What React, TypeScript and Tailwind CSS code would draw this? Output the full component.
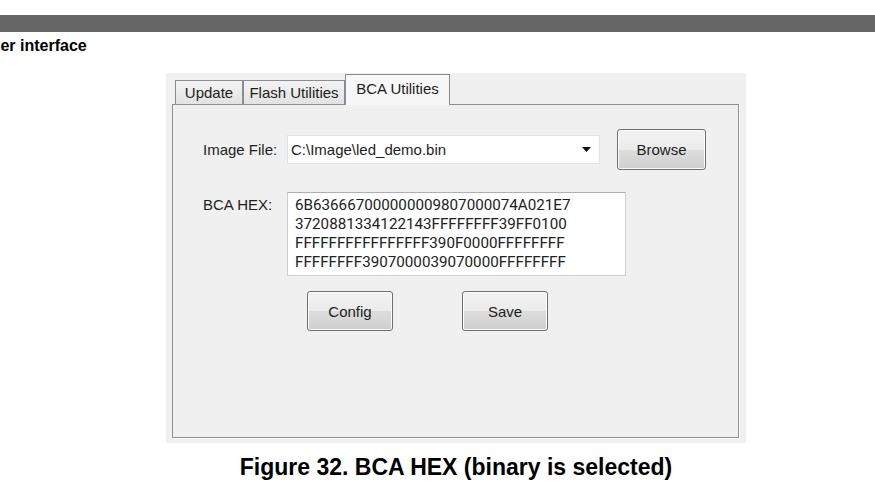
export default function App() {
  const hexLines = [
    '6B636667000000009807000074A021E7',
    '3720881334122143FFFFFFFF39FF0100',
    'FFFFFFFFFFFFFFFF390F0000FFFFFFFF',
    'FFFFFFFF3907000039070000FFFFFFFF',
  ];

  const btn =
    'rounded-[3px] border border-[#707070] text-[15px] text-[#1e1e1e] ' +
    'bg-[linear-gradient(to_bottom,#f3f3f3_0%,#ebebeb_50%,#dddddd_50%,#cfcfcf_100%)] ' +
    'shadow-[inset_0_0_0_1px_#fbfbfb] flex items-center justify-center';

  return (
    <div className="w-[875px] h-[498px] overflow-hidden bg-white font-['Liberation_Sans',Arial,sans-serif]">
      <div className="h-[15px]" />
      <div className="h-[17px] bg-[#666666]" />
      <p className="-ml-[20px] mt-[4px] text-[16px] leading-[20px] font-bold text-black whitespace-nowrap">
        User interface
      </p>

      {/* window screenshot */}
      <div className="ml-[166px] mt-[17px] w-[580px] h-[370px] bg-[#f0f0f0] flex flex-col pl-[6px] pr-[7px] pb-[5px] text-[#1e1e1e]">
        <div className="h-[31px] flex items-end pl-[3px] relative z-10">
          <div className="w-[68px] h-[24px] border border-b-0 border-[#898c95] bg-[linear-gradient(to_bottom,#f3f3f3,#e2e2e2)] flex items-center justify-center text-[15px] leading-[20px]">
            Update
          </div>
          <div className="w-[102px] h-[24px] border border-b-0 border-[#898c95] bg-[linear-gradient(to_bottom,#f3f3f3,#e2e2e2)] flex items-center justify-center text-[15px] leading-[20px]">
            Flash Utilities
          </div>
          <div className="w-[105px] h-[31px] -mb-px border border-b-0 border-[#898c95] bg-[#f7f7f7] flex justify-center pt-[4px] text-[15px] leading-[20px]">
            BCA Utilities
          </div>
        </div>

        <div className="flex-1 border border-[#8e8f93] bg-[#f0f0f0] shadow-[1px_1px_0_#ffffff] pl-[30px] pt-[24px]">
          {/* image file row */}
          <div className="flex items-center">
            <div className="w-[84px] text-[15px] leading-[19px]">Image File:</div>
            <div className="w-[313px] h-[29px] bg-white border border-[#dfe3e8] flex items-center pl-[3px] pr-[8px]">
              <span className="flex-1 text-[15px] leading-[19px]">C:\Image\led_demo.bin</span>
              <svg width="9" height="5" viewBox="0 0 9 5">
                <path d="M0 0 H9 L4.5 5 Z" fill="#111" />
              </svg>
            </div>
            <div className={`${btn} ml-[17px] w-[89px] h-[41px] pt-[2px]`}>Browse</div>
          </div>

          {/* hex row */}
          <div className="flex items-start mt-[22px]">
            <div className="w-[84px] pt-[3px] text-[15px] leading-[19px]">BCA HEX:</div>
            <div className="w-[339px] h-[84px] bg-white border border-[#c9d0d8] border-t-[#aab0b8] pl-[7px] pt-[3px] font-['Roboto',sans-serif] text-[15.2px] leading-[19px] text-[#222]">
              {hexLines.map((l) => (
                <div key={l}>{l}</div>
              ))}
            </div>
          </div>

          {/* buttons */}
          <div className="flex mt-[15px] pl-[104px] gap-[69px]">
            <div className={`${btn} w-[86px] h-[40px] pt-[2px]`}>Config</div>
            <div className={`${btn} w-[86px] h-[40px] pt-[2px]`}>Save</div>
          </div>
        </div>
      </div>

      <p className="ml-[166px] w-[580px] mt-[10px] text-center text-[23px] leading-[28px] font-bold text-black whitespace-nowrap">
        Figure 32. BCA HEX (binary is selected)
      </p>
    </div>
  );
}
